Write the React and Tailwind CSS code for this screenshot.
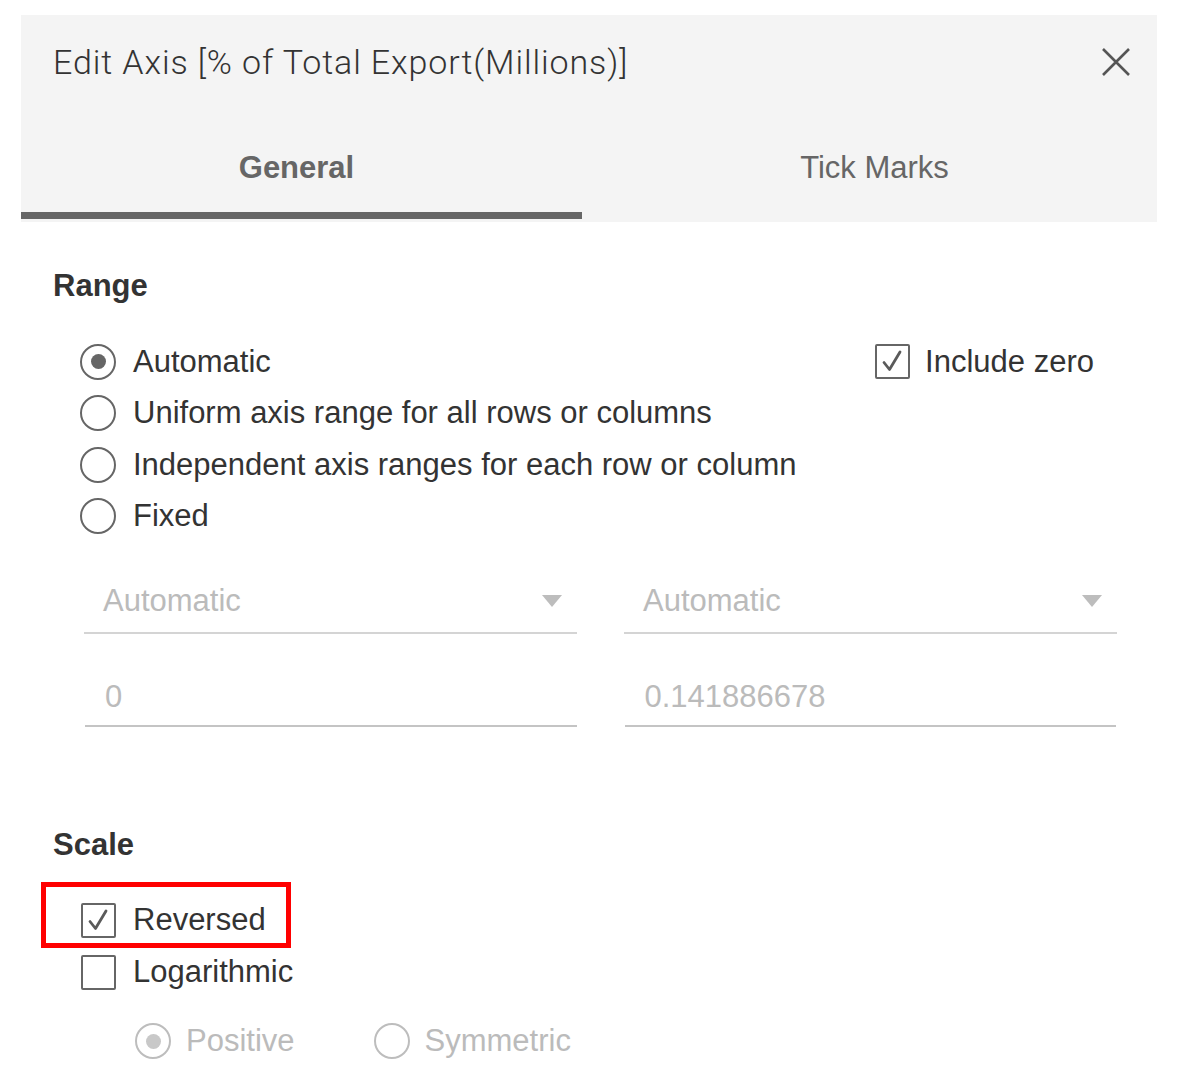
import React from "react";

const Radio = ({ checked, disabled }) => (
  <span
    className={`w-[36px] h-[36px] rounded-full border-2 flex items-center justify-center shrink-0 bg-white ${
      disabled ? "border-[#bdbdbd]" : "border-[#666]"
    }`}
  >
    {checked && (
      <span
        className={`w-[15px] h-[15px] rounded-full ${
          disabled ? "bg-[#c8c8c8]" : "bg-[#666]"
        }`}
      />
    )}
  </span>
);

const Checkbox = ({ checked }) => (
  <span className="w-[35px] h-[35px] border-2 border-[#666] rounded-[2px] flex items-center justify-center shrink-0 bg-white">
    {checked && (
      <svg className="w-[27px] h-[27px]" viewBox="0 0 27 27" fill="none">
        <path
          d="M5 14.5 L10.5 21.5 L21 4"
          stroke="#5a5a5a"
          strokeWidth="2.8"
          strokeLinecap="round"
          strokeLinejoin="round"
        />
      </svg>
    )}
  </span>
);

const RadioRow = ({ label, checked }) => (
  <label className="flex items-center gap-[17px] h-[51.5px] text-[#333]">
    <Radio checked={checked} />
    <span>{label}</span>
  </label>
);

const Dropdown = () => (
  <div className="flex-1 h-[64px] flex items-center justify-between pl-[19px] pr-[15px] border-b-2 border-[#d4d4d4] text-[#bbb]">
    <span>Automatic</span>
    <svg className="w-[20px] h-[12px]" viewBox="0 0 20 12">
      <path d="M0 0 L20 0 L10 12 Z" fill="#bdbdbd" />
    </svg>
  </div>
);

const NumberField = ({ value }) => (
  <div className="flex-1 h-[64px] flex items-center pl-[20px] pt-[7px] border-b-2 border-[#c4c4c4] text-[#bbb]">
    {value}
  </div>
);

export default function App() {
  return (
    <div className="min-h-screen bg-white pt-[15px] pl-[21px] font-['Liberation_Sans',Arial,sans-serif] text-[31px]">
      <div className="w-[1136px]">
        <div className="bg-[#f4f4f4] pb-[3px]">
          <div className="h-[94px] flex items-center justify-between pl-[32px] pr-[27px]">
            <h1 className="font-['Roboto',sans-serif] font-light text-[34px] text-[#333] tracking-[0.9px]">
              Edit Axis [% of Total Export(Millions)]
            </h1>
            <svg className="w-[28px] h-[28px]" viewBox="0 0 28 28" fill="none">
              <path
                d="M1 1 L27 27 M27 1 L1 27"
                stroke="#555"
                strokeWidth="2.6"
              />
            </svg>
          </div>
          <div className="flex">
            <button className="w-[561px] h-[110px] pt-[15px] pr-[10px] flex items-center justify-center border-b-[7px] border-[#666] font-bold text-[#666]">
              General
            </button>
            <button className="flex-1 h-[110px] pt-[15px] pl-[10px] flex items-center justify-center border-b-[7px] border-transparent text-[#666]">
              Tick Marks
            </button>
          </div>
        </div>

        <div className="pl-[32px] pr-[40px]">
          <h2 className="font-bold text-[#333] mt-[45px] h-[38px] flex items-center">
            Range
          </h2>
          <div className="mt-[31px] pl-[27px]">
            <div className="flex items-center justify-between">
              <RadioRow label="Automatic" checked />
              <label className="flex items-center gap-[15px] mr-[23px] text-[#333]">
                <Checkbox checked />
                <span>Include zero</span>
              </label>
            </div>
            <RadioRow label="Uniform axis range for all rows or columns" />
            <RadioRow label="Independent axis ranges for each row or column" />
            <RadioRow label="Fixed" />
          </div>

          <div className="mt-[28px] pl-[31px] flex gap-[47px]">
            <Dropdown />
            <Dropdown />
          </div>
          <div className="mt-[29px] pl-[32px] flex gap-[48px] pr-[1px]">
            <NumberField value="0" />
            <NumberField value="0.141886678" />
          </div>

          <h2 className="font-bold text-[#333] mt-[99px] h-[38px] flex items-center">
            Scale
          </h2>
          <div className="mt-[30px] pl-[28px] relative">
            <div className="absolute left-[-12px] top-[-12px] w-[250px] h-[66px] border-[5px] border-[#ff0000]" />
            <label className="flex items-center gap-[17px] h-[52px] text-[#333]">
              <Checkbox checked />
              <span>Reversed</span>
            </label>
            <label className="flex items-center gap-[17px] h-[52px] text-[#333]">
              <Checkbox />
              <span>Logarithmic</span>
            </label>
            <div className="flex items-center gap-[79px] pl-[54px] mt-[17px] h-[52px] text-[#bbb]">
              <span className="flex items-center gap-[15px]">
                <Radio checked disabled />
                <span>Positive</span>
              </span>
              <span className="flex items-center gap-[15px]">
                <Radio disabled />
                <span>Symmetric</span>
              </span>
            </div>
          </div>
        </div>
      </div>
    </div>
  );
}
